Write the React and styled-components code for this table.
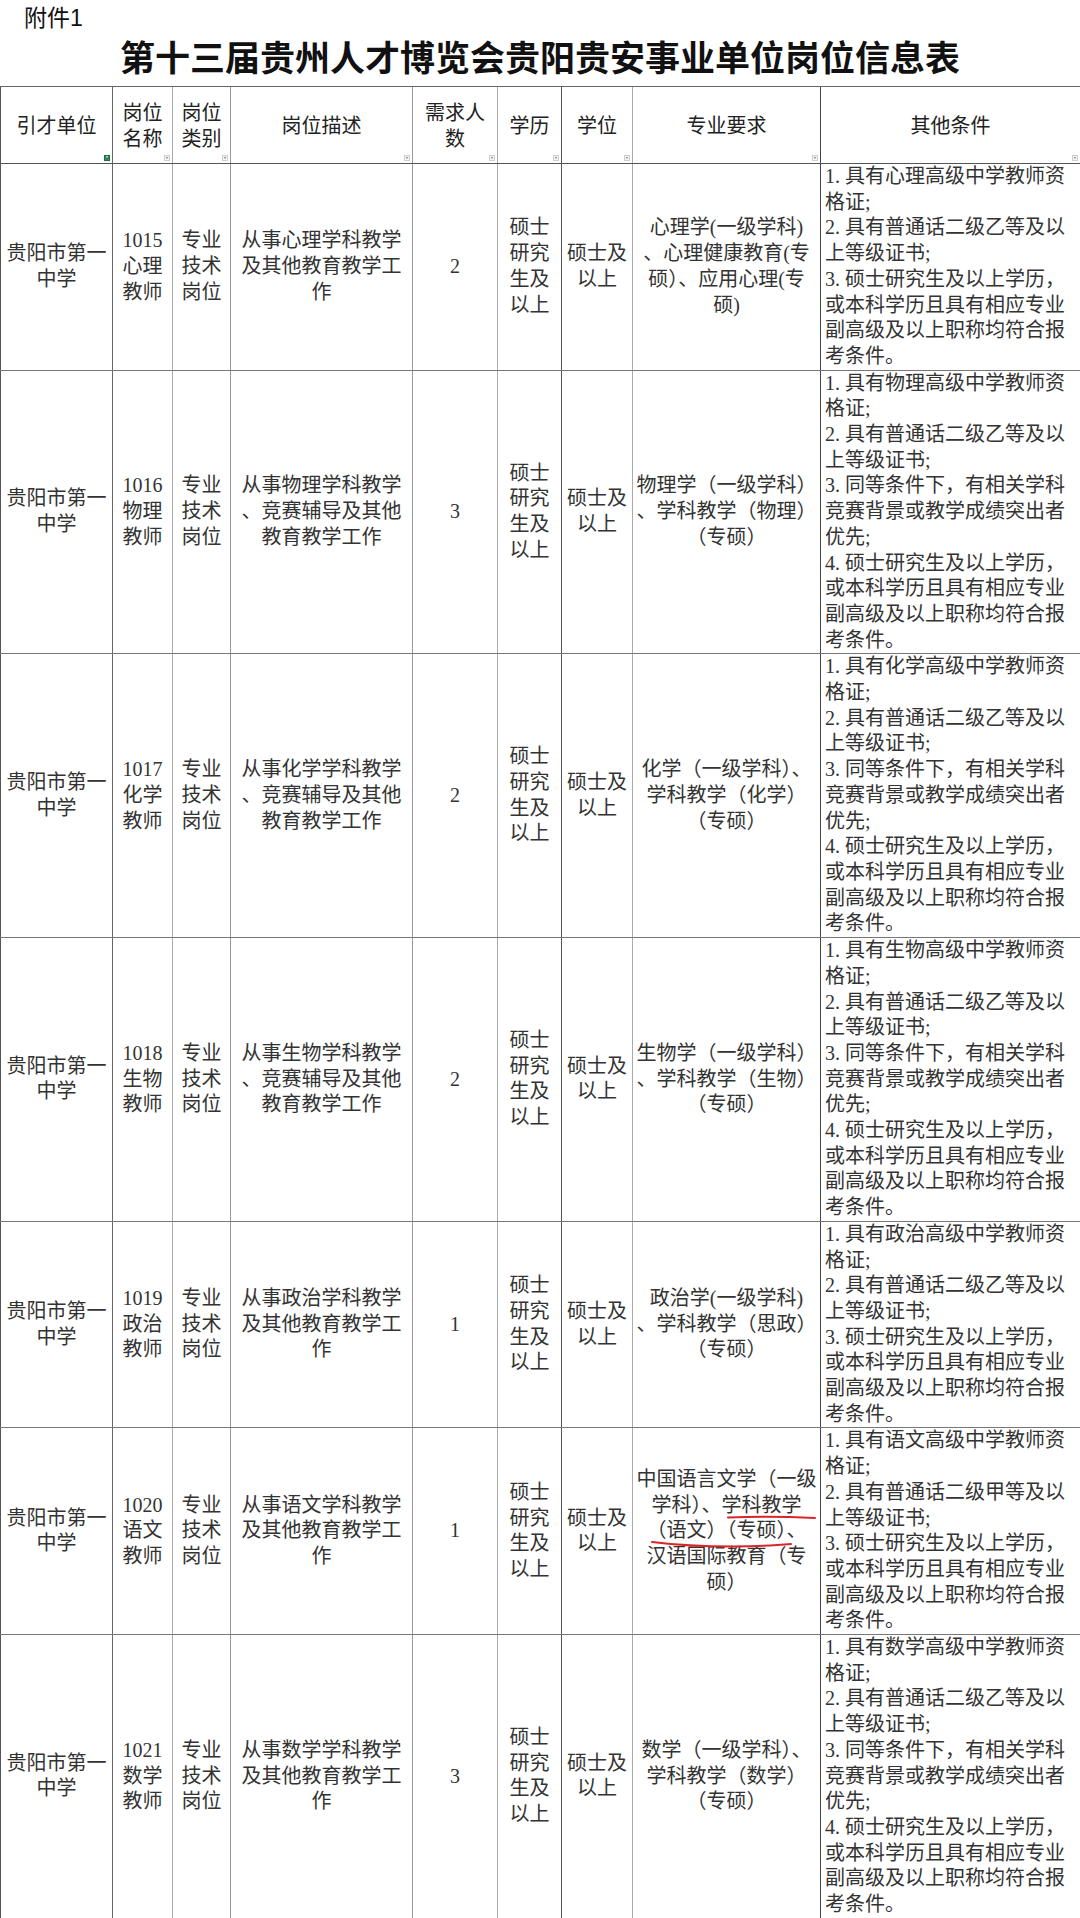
import React from "react";
import styled, { createGlobalStyle } from "styled-components";

const GlobalStyle = createGlobalStyle`
  html, body {
    margin: 0;
    padding: 0;
    background: #fff;
  }
`;

const COLS = "112px 60px 58px 182px 85px 64px 71px 188px 260px";
const LINES = ["#555", "#666", "#aaa", "#999", "#999", "#aaa", "#555", "#aaa", "#444"];

const Page = styled.div`
  width: 1080px;
  height: 1918px;
  overflow: hidden;
  background: #fff;
  font-family: "Liberation Serif", "Noto Sans CJK SC", serif;
  color: #333;
`;

const Attachment = styled.div`
  padding: 5px 0 0 24px;
  font-family: "Liberation Sans", "Noto Sans CJK SC", sans-serif;
  font-size: 23px;
  line-height: 26px;
  color: #111;
`;

const Title = styled.h1`
  margin: 7px 0 0;
  font-family: "Liberation Serif", "Noto Sans CJK SC", serif;
  font-size: 35px;
  line-height: 44px;
  font-weight: 700;
  text-align: center;
  color: #111;
`;

const Table = styled.div`
  margin-top: 4px;
  border-top: 1px solid #666;
`;

const Row = styled.div`
  display: grid;
  grid-template-columns: ${COLS};
  min-height: ${(p) => p.$height || 0}px;
  border-bottom: 1px solid ${(p) => (p.$head ? "#555" : "#777")};
`;

const Cell = styled.div`
  position: relative;
  box-sizing: border-box;
  border-left: 1px solid ${(p) => p.$line};
  display: flex;
  flex-direction: column;
  justify-content: center;
  align-items: ${(p) => (p.$left ? "flex-start" : "center")};
  padding: ${(p) => (p.$head ? "3px 2px 0" : p.$left ? "0 0 0 4px" : "0 2px")};
  color: ${(p) => (p.$head ? "#222" : "#333")};
`;

const Text = styled.div`
  white-space: pre;
  font-size: 20px;
  line-height: 25.7px;
  text-align: ${(p) => (p.$left ? "left" : "center")};
`;

const FilterArrow = styled.span`
  position: absolute;
  right: 2px;
  bottom: 2px;
  width: 6px;
  height: 6px;
  box-sizing: border-box;
  border: 1px solid ${(p) => (p.$active ? "#1f6b45" : "#cfcfcf")};
  background: ${(p) => (p.$active ? "#2f8a5a" : "#f3f3f3")};

  &::after {
    content: "";
    position: absolute;
    left: 1px;
    top: ${(p) => (p.$active ? "0" : "1px")};
    border-left: 1.5px solid transparent;
    border-right: 1.5px solid transparent;
    border-top: 2px solid ${(p) => (p.$active ? "#e8f5ec" : "#777")};
  }
`;

const Scribble = styled.svg`
  position: absolute;
  left: 0;
  top: 0;
  width: 100%;
  height: 100%;
  pointer-events: none;
  overflow: visible;
`;

const headers = [
  "引才单位",
  "岗位\n名称",
  "岗位\n类别",
  "岗位描述",
  "需求人\n数",
  "学历",
  "学位",
  "专业要求",
  "其他条件",
];

const shortConditions = (subject, grade) => [
  `1. 具有${subject}高级中学教师资`,
  "格证;",
  `2. 具有普通话二级${grade}等及以`,
  "上等级证书;",
  "3. 硕士研究生及以上学历，",
  "或本科学历且具有相应专业",
  "副高级及以上职称均符合报",
  "考条件。",
];

const longConditions = (subject) => [
  `1. 具有${subject}高级中学教师资`,
  "格证;",
  "2. 具有普通话二级乙等及以",
  "上等级证书;",
  "3. 同等条件下，有相关学科",
  "竞赛背景或教学成绩突出者",
  "优先;",
  "4. 硕士研究生及以上学历，",
  "或本科学历且具有相应专业",
  "副高级及以上职称均符合报",
  "考条件。",
];

const teachOnly = (subject) => `从事${subject}学科教学\n及其他教育教学工\n作`;
const withContest = (subject) => `从事${subject}学科教学\n、竞赛辅导及其他\n教育教学工作`;

const positions = [
  {
    code: "1015",
    name: "心理",
    desc: teachOnly("心理"),
    count: 2,
    major: "心理学(一级学科)\n、心理健康教育(专\n硕）、应用心理(专\n硕)",
    other: shortConditions("心理", "乙"),
  },
  {
    code: "1016",
    name: "物理",
    desc: withContest("物理"),
    count: 3,
    major: "物理学（一级学科）\n、学科教学（物理）\n（专硕）",
    other: longConditions("物理"),
  },
  {
    code: "1017",
    name: "化学",
    desc: withContest("化学"),
    count: 2,
    major: "化学（一级学科）、\n学科教学（化学）\n（专硕）",
    other: longConditions("化学"),
  },
  {
    code: "1018",
    name: "生物",
    desc: withContest("生物"),
    count: 2,
    major: "生物学（一级学科）\n、学科教学（生物）\n（专硕）",
    other: longConditions("生物"),
  },
  {
    code: "1019",
    name: "政治",
    desc: teachOnly("政治"),
    count: 1,
    major: "政治学(一级学科)\n、学科教学（思政）\n（专硕）",
    other: shortConditions("政治", "乙"),
  },
  {
    code: "1020",
    name: "语文",
    desc: teachOnly("语文"),
    count: 1,
    major: "中国语言文学（一级\n学科）、学科教学\n（语文）（专硕）、\n汉语国际教育（专\n硕）",
    marked: true,
    other: shortConditions("语文", "甲"),
  },
  {
    code: "1021",
    name: "数学",
    desc: teachOnly("数学"),
    count: 3,
    major: "数学（一级学科）、\n学科教学（数学）\n（专硕）",
    other: longConditions("数学"),
  },
];

// hand-drawn red pen marks under "学科教学" and "（语文）（专硕）"
function PenMarks() {
  return (
    <Scribble>
      <path
        d="M95 89.5 Q138 88 182 90"
        fill="none"
        stroke="#d8252b"
        strokeWidth="2"
        strokeLinecap="round"
      />
      <path
        d="M19 114 Q55 118.5 100 118.5 Q135 118 158 116"
        fill="none"
        stroke="#d8252b"
        strokeWidth="2"
        strokeLinecap="round"
      />
    </Scribble>
  );
}

function HeaderRow() {
  return (
    <Row $head $height={76}>
      {headers.map((label, i) => (
        <Cell key={label} $head $line={LINES[i]}>
          <Text>{label}</Text>
          <FilterArrow $active={i === 0} />
        </Cell>
      ))}
    </Row>
  );
}

function PositionRow({ item }) {
  const cells = [
    "贵阳市第一\n中学",
    `${item.code}\n${item.name}\n教师`,
    "专业\n技术\n岗位",
    item.desc,
    String(item.count),
    "硕士\n研究\n生及\n以上",
    "硕士及\n以上",
  ];
  return (
    <Row>
      {cells.map((content, i) => (
        <Cell key={i} $line={LINES[i]}>
          <Text>{content}</Text>
        </Cell>
      ))}
      <Cell $line={LINES[7]}>
        <Text>{item.major}</Text>
        {item.marked && <PenMarks />}
      </Cell>
      <Cell $left $line={LINES[8]}>
        <Text $left>{item.other.join("\n")}</Text>
      </Cell>
    </Row>
  );
}

export default function App() {
  return (
    <Page>
      <GlobalStyle />
      <Attachment>附件1</Attachment>
      <Title>第十三届贵州人才博览会贵阳贵安事业单位岗位信息表</Title>
      <Table>
        <HeaderRow />
        {positions.map((item) => (
          <PositionRow key={item.code} item={item} />
        ))}
      </Table>
    </Page>
  );
}
